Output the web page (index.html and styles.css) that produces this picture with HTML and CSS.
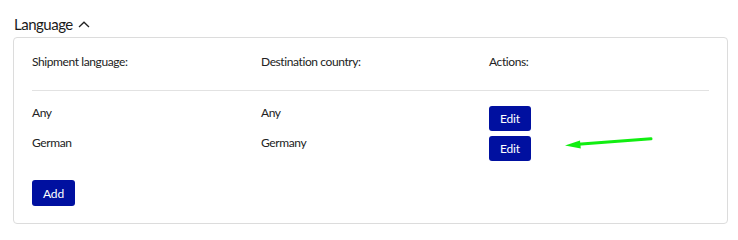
FILE: index.html
```html
<!DOCTYPE html>
<html>
<head>
<meta charset="utf-8">
<link rel="stylesheet" href="styles.css">
</head>
<body>
<div class="page">
  <h2 class="section-title">Language
    <svg class="chevron" width="12" height="7" viewBox="0 0 12 7"><path d="M1 6 L6 1.2 L11 6" fill="none" stroke="#222" stroke-width="1.3"/></svg>
  </h2>
  <div class="card">
    <div class="grid head">
      <div>Shipment language:</div>
      <div>Destination country:</div>
      <div>Actions:</div>
    </div>
    <div class="divider"></div>
    <div class="rows">
      <div class="grid row">
        <div class="cell">Any</div>
        <div class="cell">Any</div>
        <div><button class="btn">Edit</button></div>
      </div>
      <div class="grid row">
        <div class="cell">German</div>
        <div class="cell">Germany</div>
        <div><button class="btn">Edit</button></div>
      </div>
    </div>
    <button class="btn add">Add</button>
  </div>
  <svg class="arrow" width="100" height="20" viewBox="0 0 100 20">
    <path d="M13 9.2 L86 3.8" stroke="#11ee11" stroke-width="3" stroke-linecap="round" fill="none"/>
    <path d="M0 10.5 L15 5.5 L15.8 13.6 Z" fill="#11ee11"/>
  </svg>
</div>
</body>
</html>
```

FILE: styles.css
```css
html, body {
  margin: 0;
  padding: 0;
  background: #fff;
}
body {
  font-family: Lato, "Noto Sans", sans-serif;
  color: #222;
}
.page {
  position: relative;
  padding: 11px 10px 0 13px;
}
.section-title {
  margin: 0 0 0 1px;
  font-size: 15px;
  font-weight: 400;
  letter-spacing: -0.5px;
  line-height: 20px;
  height: 26px;
  display: flex;
  align-items: center;
  gap: 5px;
  color: #1a1a1a;
}
.chevron {
  margin-top: 1px;
}
.card {
  border: 1px solid #dcdcdc;
  border-radius: 4px;
  padding: 17px 18px 17px 18px;
  font-size: 12px;
  letter-spacing: -0.4px;
}
.grid {
  display: grid;
  grid-template-columns: 229px 228px 1fr;
}
.head {
  line-height: 14px;
  color: #222;
}
.divider {
  height: 1px;
  background: #e2e2e2;
  margin: 21px 0 15px;
}
.rows {
  display: flex;
  flex-direction: column;
  gap: 5px;
}
.row {
  align-items: start;
}
.cell {
  line-height: 14px;
  padding-top: 0;
}
.btn {
  display: block;
  border: none;
  border-radius: 3px;
  background: #0010a0;
  color: #fff;
  font-family: Lato, "Noto Sans", sans-serif;
  font-size: 12px;
  letter-spacing: -0.2px;
  height: 25px;
  width: 42px;
  padding: 0;
  cursor: pointer;
}
.add {
  margin-top: 19px;
  width: 43px;
  height: 26px;
}
.arrow {
  position: absolute;
  left: 565px;
  top: 135px;
}
```
